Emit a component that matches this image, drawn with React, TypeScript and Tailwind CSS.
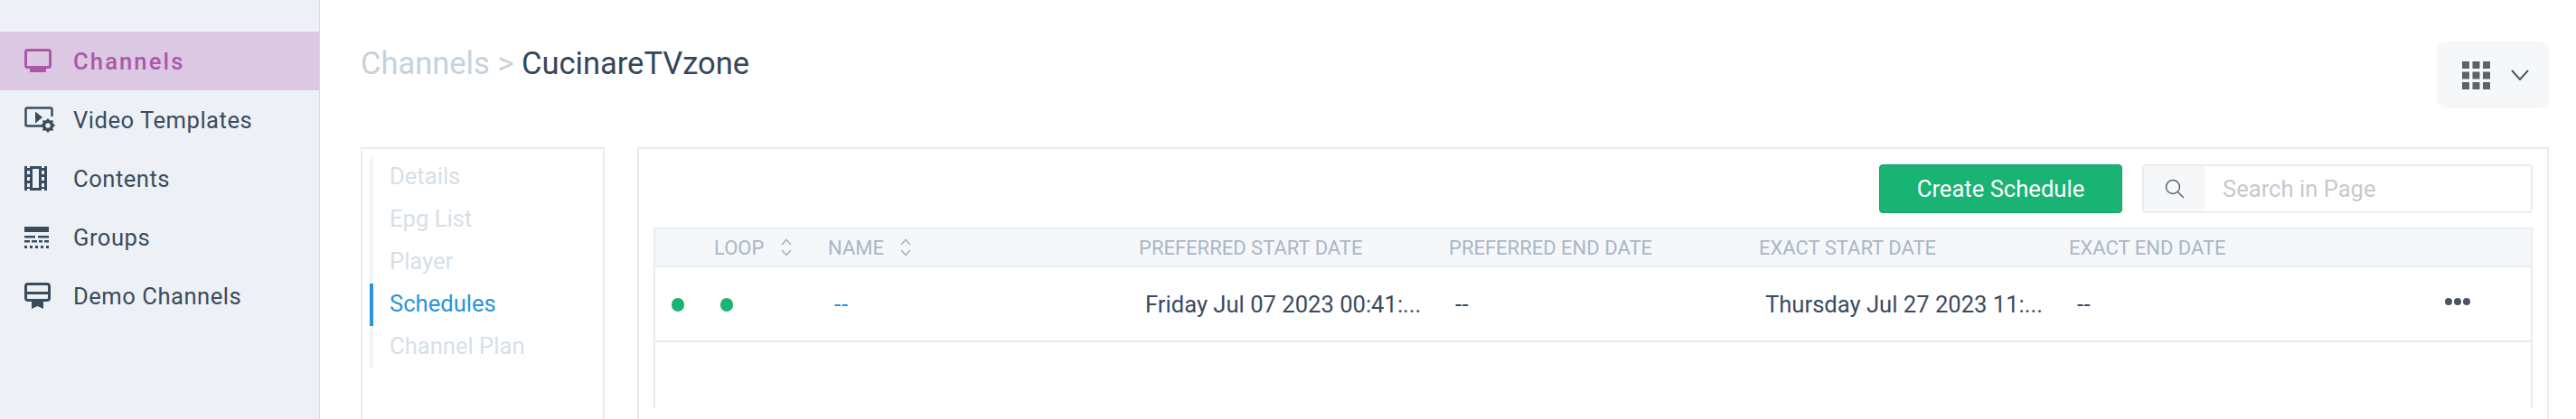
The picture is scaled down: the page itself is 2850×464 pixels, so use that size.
import React from 'react'

const MonitorIcon = () => (
  <svg width="30" height="27" viewBox="0 0 30 27" fill="none" className="shrink-0">
    <rect x="1.5" y="1.5" width="27" height="19" rx="2" stroke="currentColor" strokeWidth="3" />
    <rect x="6" y="22" width="18" height="4" fill="currentColor" />
  </svg>
)

const VideoTemplateIcon = () => (
  <svg width="34" height="29" viewBox="0 0 34 29" fill="none" className="shrink-0">
    <path d="M20 21.5H3a1.5 1.5 0 0 1-1.5-1.5V3A1.5 1.5 0 0 1 3 1.5h26A1.500 1.500 0 0 1 30.500 3v8" stroke="currentColor" strokeWidth="2.500" />
    <path d="M12 5.500 20 12l-8 6.500z" fill="currentColor" />
    <circle cx="26" cy="21" r="4.500" stroke="currentColor" strokeWidth="3.500" />
    <path d="M26 13.500v3M26 25.500v3M18.500 21h3M30.500 21h3M20.700 15.700l2.100 2.100M29.200 24.200l2.100 2.100M20.700 26.300l2.100-2.100M29.200 17.800l2.100-2.100" stroke="currentColor" strokeWidth="2.500" />
  </svg>
)

const FilmIcon = () => (
  <svg width="25" height="27" viewBox="0 0 25 27" fill="none" className="shrink-0">
    <path d="M0 0h3v2h3V0h13v2h3V0h3v27h-3v-2h-3v2H6v-2H3v2H0z" fill="currentColor" />
    <path d="M9 3h7v21H9zM3 5h3v4H3zM3 12h3v4H3zM3 19h3v4H3zM19 5h3v4h-3zM19 12h3v4h-3zM19 19h3v4h-3z" fill="#edf1f6" />
  </svg>
)

const GroupsIcon = () => (
  <svg width="27" height="24" viewBox="0 0 27 24" fill="currentColor" className="shrink-0">
    <rect x="0" y="0" width="27" height="6" />
    <rect x="0" y="10" width="12" height="2.500" />
    <rect x="15" y="10" width="12" height="2.500" />
    <rect x="0" y="15" width="6" height="2.500" />
    <rect x="8" y="15" width="6" height="2.500" />
    <rect x="16" y="15" width="4" height="2.500" />
    <rect x="22" y="15" width="5" height="2.500" />
    <rect x="0" y="21" width="3" height="3" />
    <rect x="6" y="21" width="3" height="3" />
    <rect x="12" y="21" width="3" height="3" />
    <rect x="18" y="21" width="3" height="3" />
    <rect x="24" y="21" width="3" height="3" />
  </svg>
)

const DemoIcon = () => (
  <svg width="29" height="29" viewBox="0 0 29 29" fill="none" className="shrink-0">
    <rect x="1.500" y="1.500" width="26" height="18" rx="2.500" stroke="currentColor" strokeWidth="3" />
    <rect x="2" y="10" width="25" height="3" fill="currentColor" />
    <path d="M8 20h13v9l-6.500-3L8 29z" fill="currentColor" />
  </svg>
)

const SortIcon = () => (
  <svg width="14" height="20" viewBox="0 0 14 20" fill="none" stroke="#a9b7c6" strokeWidth="1.800" className="shrink-0">
    <path d="M2 7 7 1.500 12 7M2 13l5 5.500L12 13" />
  </svg>
)

const AppsIcon = () => (
  <svg width="31" height="31" viewBox="0 0 31 31" fill="#5f6368" className="shrink-0">
    <rect x="0" y="0" width="8" height="8" />
    <rect x="11.500" y="0" width="8" height="8" />
    <rect x="23" y="0" width="8" height="8" />
    <rect x="0" y="11.500" width="8" height="8" />
    <rect x="11.500" y="11.500" width="8" height="8" />
    <rect x="23" y="11.500" width="8" height="8" />
    <rect x="0" y="23" width="8" height="8" />
    <rect x="11.500" y="23" width="8" height="8" />
    <rect x="23" y="23" width="8" height="8" />
  </svg>
)

const navItems = [
  { label: 'Channels', icon: <MonitorIcon />, active: true },
  { label: 'Video Templates', icon: <VideoTemplateIcon /> },
  { label: 'Contents', icon: <FilmIcon /> },
  { label: 'Groups', icon: <GroupsIcon /> },
  { label: 'Demo Channels', icon: <DemoIcon /> },
]

const tabs = ['Details', 'Epg List', 'Player', 'Schedules', 'Channel Plan']

const App: React.FC = () => {
  return (
    <div className="flex w-[2850px] h-[464px] overflow-hidden bg-white font-['Roboto',sans-serif] text-[25.6px] text-[#3a4b5e]">
      {/* Sidebar */}
      <aside className="w-[354px] shrink-0 bg-[#edf1f6] border-r border-[#d5dce3] pt-[35px]">
        {navItems.map((item) => (
          <div
            key={item.label}
            className={
              item.active
                ? 'h-[65px] flex items-center bg-[#dbc9e3] text-[#ae56ab] font-medium tracking-[2.1px]'
                : 'h-[65px] flex items-center tracking-[0.5px]'
            }
          >
            <div className="w-[81px] pl-[27px] flex items-center">{item.icon}</div>
            <span className="pt-[1px]">{item.label}</span>
          </div>
        ))}
      </aside>

      {/* Main */}
      <main className="flex-1 min-w-0 pl-[45px] pr-[30px]">
        <div className="flex justify-between items-start mt-[46px] mb-[43px]">
          <h1 className="text-[34.500px] leading-[49px] text-[#35465a]">
            <span className="text-[#c5d2dc]">Channels &gt; </span>CucinareTVzone
          </h1>
          <button className="w-[124px] h-[74px] rounded-[10px] bg-[#f6f7f9] flex items-center pl-[28px] gap-[23px]">
            <AppsIcon />
            <svg width="20" height="12" viewBox="0 0 20 12" fill="none" stroke="#4a5563" strokeWidth="2">
              <path d="M1 1l9 10 9-10" />
            </svg>
          </button>
        </div>

        <div className="flex gap-[36px] items-stretch h-[320px]">
          {/* Tabs */}
          <div className="w-[270px] shrink-0 border-2 border-[#e8edf2] pt-[8px] pl-[8px]">
            <div className="border-l-4 border-[#f4f5f8]">
              {tabs.map((tab) => (
                <div
                  key={tab}
                  className={
                    tab === 'Schedules'
                      ? 'h-[47px] pb-[3px] -ml-[4px] pl-[18px] border-l-4 border-[#2a94db] text-[#2a94db] flex items-center'
                      : 'h-[47px] pb-[3px] pl-[18px] text-[#d5dfe8] flex items-center'
                  }
                >
                  {tab}
                </div>
              ))}
            </div>
          </div>

          {/* Schedules panel */}
          <div className="flex-1 min-w-0 border-2 border-[#e8edf2] pt-[17px] px-[16px]">
            <div className="flex justify-end gap-[22px] mb-[16px]">
              <button className="w-[269px] h-[54px] rounded-[4px] bg-[#19b373] border border-[#15a067] text-white">
                Create Schedule
              </button>
              <div className="w-[432px] h-[54px] rounded-[4px] border-2 border-[#e8edf2] flex overflow-hidden">
                <div className="w-[67px] bg-[#f6f7f9] flex items-center justify-center">
                  <svg width="24" height="24" viewBox="0 0 24 24" fill="none" stroke="#5f6368" strokeWidth="1.500">
                    <circle cx="10" cy="10" r="7.500" />
                    <path d="M15.500 15.500 22 22" />
                  </svg>
                </div>
                <div className="flex-1 pl-[20px] flex items-center text-[#c6c9cd]">Search in Page</div>
              </div>
            </div>

            <div className="border-x-2 border-t-2 border-[#e8edf2] h-[200px]">
              {/* Table header */}
              <div className="grid grid-cols-[52px_126px_344px_343px_343px_343px_1fr] h-[42px] items-center bg-[#f6f7f9] border-b-2 border-[#e8edf2] text-[22px] text-[#a9b7c6]">
                <div />
                <div className="pl-[13px] flex items-center gap-[18px]">LOOP <SortIcon /></div>
                <div className="pl-[13px] flex items-center gap-[17px]">NAME <SortIcon /></div>
                <div className="pl-[13px]">PREFERRED START DATE</div>
                <div className="pl-[13px]">PREFERRED END DATE</div>
                <div className="pl-[13px]">EXACT START DATE</div>
                <div className="pl-[13px]">EXACT END DATE</div>
              </div>
              {/* Table row */}
              <div className="grid grid-cols-[52px_126px_344px_343px_343px_343px_1fr] h-[83px] items-center border-b-2 border-[#e8edf2] pt-[2px]">
                <div className="pl-[18px]"><div className="w-[14px] h-[15px] rounded-full bg-[#19b373]" /></div>
                <div className="pl-[20px]"><div className="w-[14px] h-[15px] rounded-full bg-[#19b373]" /></div>
                <div className="pl-[20px] text-[#2a94db] tracking-[1px]">--</div>
                <div className="pl-[20px]">Friday Jul 07 2023 00:41:...</div>
                <div className="pl-[20px] tracking-[0.5px]">--</div>
                <div className="pl-[20px]">Thursday Jul 27 2023 11:...</div>
                <div className="pl-[22px] flex items-center justify-between pr-[66px]">
                  <span className="tracking-[0.5px]">--</span>
                  <svg width="30" height="14" viewBox="0 0 30 14" fill="#4a5563" className="-mt-[6px]">
                    <circle cx="5" cy="7" r="4" />
                    <circle cx="15" cy="7" r="4" />
                    <circle cx="25" cy="7" r="4" />
                  </svg>
                </div>
              </div>
            </div>
          </div>
        </div>
      </main>
    </div>
  )
}

export default App
